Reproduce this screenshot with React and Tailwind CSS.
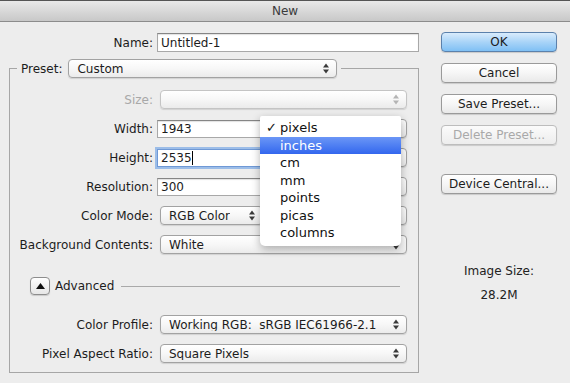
import React from 'react';

function Arrows({ dim }) {
    const fill = dim ? '#b4b4b4' : '#3a3a3a';
    return (
        <svg width="6" height="11" viewBox="0 0 6 11" className="shrink-0">
            <path d="M3 0.5 L6 4.5 H0 Z" fill={fill} />
            <path d="M0 6.5 H6 L3 10.5 Z" fill={fill} />
        </svg>
    );
}

function Popup({ value, className = '', disabled }) {
    return (
        <div
            className={`h-[19px] flex items-center rounded-[4px] border pl-[8px] pr-[7px] bg-linear-to-b from-white via-[#f7f7f7] to-[#ebebeb] shadow-[0_1px_1px_rgba(0,0,0,0.12)] ${
                disabled ? 'border-[#c4c4c4]' : 'border-[#a2a2a2]'
            } ${className}`}
        >
            <span className="truncate whitespace-pre">{value}</span>
            <span className="ml-auto flex items-center">
                <Arrows dim={disabled} />
            </span>
        </div>
    );
}

function Field({ value, focused, className = '' }) {
    return (
        <div
            className={`h-[18px] flex items-center bg-white pl-[3px] border ${
                focused
                    ? 'border-[#6f99d6] shadow-[0_0_0_2px_#9cbde8]'
                    : 'border-[#a8a8a8] border-t-[#858585] shadow-[inset_0_1px_1px_rgba(0,0,0,0.12)]'
            } ${className}`}
        >
            <span>{value}</span>
            {focused && <span className="w-px h-[14px] bg-black" />}
        </div>
    );
}

function Row({ label, dim, children, className = '' }) {
    return (
        <div className={`flex items-center h-[19px] ${className}`}>
            <div className={`w-[143px] text-right ${dim ? 'text-[#a8a8a8]' : ''}`}>{label}</div>
            <div className="flex items-center ml-[4px]">{children}</div>
        </div>
    );
}

function Button({ children, primary, disabled, className = '' }) {
    return (
        <div
            className={`w-[116px] h-[20px] flex items-center justify-center rounded-[4px] border shadow-[0_1px_1px_rgba(0,0,0,0.15)] ${
                primary
                    ? 'border-[#5b81ac] bg-linear-to-b from-[#d9ecfc] via-[#a9d4f8] to-[#7fc0f4]'
                    : disabled
                    ? 'border-[#bdbdbd] bg-linear-to-b from-[#fbfbfb] to-[#ededed] text-[#a9a9a9]'
                    : 'border-[#9a9a9a] bg-linear-to-b from-white via-[#f6f6f6] to-[#e9e9e9]'
            } ${className}`}
        >
            {children}
        </div>
    );
}

const units = ['pixels', 'inches', 'cm', 'mm', 'points', 'picas', 'columns'];

export default function App() {
    return (
        <div className="relative w-[570px] h-[383px] overflow-hidden bg-[#ededed] text-[12px] leading-none text-[#1c1c1c] font-['DejaVu_Sans',sans-serif]">
            <div className="h-[22px] flex items-center justify-center border-t border-t-[#555] border-b border-b-[#8c8c8c] bg-linear-to-b from-[#e9e9e9] to-[#c8c8c8] text-[#3b3b3b]">
                New
            </div>

            <div className="flex">
                {/* left side */}
                <div className="w-[430px] pt-[11px]">
                    <div className="flex items-center h-[19px]">
                        <div className="w-[153px] text-right">Name:</div>
                        <Field value="Untitled-1" className="ml-[4px] w-[262px] h-[19px]" />
                    </div>

                    <fieldset className="mt-[7px] ml-[9px] w-[410px] border border-[#a6a6a6] pb-[9px]">
                        <legend className="ml-[7px] px-[4px] flex items-center">
                            <span>Preset:</span>
                            <Popup value="Custom" className="ml-[6px] w-[269px]" />
                        </legend>

                        <div className="flex flex-col gap-[10px] pt-[12px]">
                            <Row label="Size:" dim>
                                <Popup value="" disabled className="ml-[3px] w-[247px]" />
                            </Row>
                            {/* unit popups sit under the open menu, so their labels are hidden */}
                            <Row label="Width:">
                                <Field value="1943" className="w-[108px]" />
                                <Popup value="" className="ml-[5px] w-[137px]" />
                            </Row>
                            <Row label="Height:">
                                <Field value="2535" focused className="w-[108px]" />
                                <Popup value="" className="ml-[5px] w-[137px]" />
                            </Row>
                            <Row label="Resolution:">
                                <Field value="300" className="w-[108px]" />
                                <Popup value="" className="ml-[5px] w-[137px]" />
                            </Row>
                            <Row label="Color Mode:">
                                <Popup value="RGB Color" className="ml-[3px] w-[103px]" />
                                <Popup value="" className="ml-[7px] w-[137px]" />
                            </Row>
                            <Row label="Background Contents:">
                                <Popup value="White" className="ml-[3px] w-[247px]" />
                            </Row>
                        </div>

                        <div className="flex items-center mt-[23px] ml-[20px] mr-[18px] h-[18px]">
                            <div className="w-[20px] h-[18px] flex items-center justify-center rounded-[4px] border border-[#8d8d8d] bg-linear-to-b from-white to-[#e6e6e6] shadow-[0_1px_1px_rgba(0,0,0,0.15)]">
                                <svg width="9" height="6" viewBox="0 0 9 6">
                                    <path d="M4.5 0 L9 6 H0 Z" fill="#111" />
                                </svg>
                            </div>
                            <span className="ml-[5px]">Advanced</span>
                            <div className="flex-1 ml-[7px] h-px bg-[#a9a9a9]" />
                        </div>

                        <div className="flex flex-col gap-[10px] mt-[20px]">
                            <Row label="Color Profile:">
                                <Popup value="Working RGB:  sRGB IEC61966-2.1" className="ml-[3px] w-[247px]" />
                            </Row>
                            <Row label="Pixel Aspect Ratio:">
                                <Popup value="Square Pixels" className="ml-[3px] w-[247px]" />
                            </Row>
                        </div>
                    </fieldset>
                </div>

                {/* right side */}
                <div className="w-[140px] pl-[11px] pt-[10px] flex flex-col">
                    <Button primary>OK</Button>
                    <Button className="mt-[11px]">Cancel</Button>
                    <Button className="mt-[11px]">Save Preset...</Button>
                    <Button disabled className="mt-[11px]">Delete Preset...</Button>
                    <Button className="mt-[29px]">Device Central...</Button>
                    <div className="w-[116px] mt-[71px] flex flex-col items-center gap-[12px] text-[#222]">
                        <span>Image Size:</span>
                        <span>28.2M</span>
                    </div>
                </div>
            </div>

            {/* unit menu, open over the Width popup */}
            <div className="absolute left-[260px] top-[116px] w-[141px] pt-[3px] pb-[4px] bg-white rounded-b-[5px] rounded-t-[2px] shadow-[0_3px_9px_rgba(0,0,0,0.3)]">
                {units.map((u) => (
                    <div
                        key={u}
                        className={`h-[17.5px] flex items-center pl-[20px] relative text-[13px] ${
                            u === 'inches' ? 'bg-linear-to-b from-[#6b96f6] to-[#3366ee] text-white' : 'text-[#111]'
                        }`}
                    >
                        {u === 'pixels' && <span className="absolute left-[6px]">✓</span>}
                        {u}
                    </div>
                ))}
            </div>
        </div>
    );
}
